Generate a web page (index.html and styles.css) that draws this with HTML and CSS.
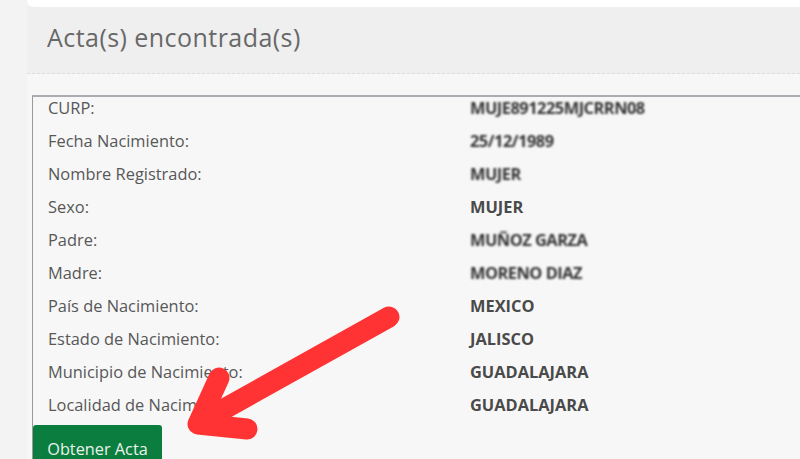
FILE: index.html
```html
<!DOCTYPE html>
<html lang="es">
<head>
<meta charset="utf-8">
<title>Acta(s) encontrada(s)</title>
<link rel="stylesheet" href="styles.css">
</head>
<body>
<div class="page">
  <div class="topstrip"></div>
  <div class="panel">
    <div class="panel-head">
      <h2 class="title">Acta(s) encontrada(s)</h2>
    </div>
    <div class="panel-body">
      <div class="record">
        <div class="rows">
          <div class="row"><span class="label">CURP:</span><span class="value blur">MUJE891225MJCRRN08</span></div>
          <div class="row"><span class="label">Fecha Nacimiento:</span><span class="value blur">25/12/1989</span></div>
          <div class="row"><span class="label">Nombre Registrado:</span><span class="value blur">MUJER</span></div>
          <div class="row"><span class="label">Sexo:</span><span class="value">MUJER</span></div>
          <div class="row"><span class="label">Padre:</span><span class="value blur">MUÑOZ GARZA</span></div>
          <div class="row"><span class="label">Madre:</span><span class="value blur">MORENO DIAZ</span></div>
          <div class="row"><span class="label">País de Nacimiento:</span><span class="value">MEXICO</span></div>
          <div class="row"><span class="label">Estado de Nacimiento:</span><span class="value">JALISCO</span></div>
          <div class="row"><span class="label">Municipio de Nacimiento:</span><span class="value">GUADALAJARA</span></div>
          <div class="row"><span class="label">Localidad de Nacimiento:</span><span class="value">GUADALAJARA</span></div>
        </div>
        <button class="btn-obtener" type="button">Obtener Acta</button>
      </div>
    </div>
  </div>
  <svg class="arrow" width="800" height="459" viewBox="0 0 800 459" aria-hidden="true">
    <g fill="none" stroke="#ff3333" stroke-width="21" stroke-linecap="round" stroke-linejoin="round">
      <line x1="389" y1="317" x2="199" y2="423"/>
      <polyline points="219,378 198,424 247,429"/>
    </g>
  </svg>
</div>
</body>
</html>
```
FILE: styles.css
```css
* { box-sizing: border-box; }
html, body { margin: 0; padding: 0; }
body {
  background: #f3f3f3;
  font-family: "Open Sans", "Liberation Sans", sans-serif;
  width: 800px;
  height: 459px;
  overflow: hidden;
}
.page {
  position: relative;
  width: 800px;
  height: 459px;
  overflow: hidden;
}
.topstrip {
  height: 7px;
  margin-left: 27px;
  background: #ffffff;
  border-bottom-left-radius: 8px;
}
.panel {
  margin-left: 27px;
  background: #f7f7f7;
}
.panel-head {
  height: 67px;
  background: #efefef;
  border-bottom: 1px dashed #dcdcdc;
  display: flex;
  align-items: center;
  padding-left: 20px;
  padding-bottom: 7px;
}
.title {
  margin: 0;
  font-family: "Open Sans", "Liberation Sans", sans-serif;
  font-weight: 400;
  font-size: 25px;
  letter-spacing: 0.45px;
  color: #686868;
}
.panel-body {
  padding-top: 21px;
  padding-left: 5px;
}
.record {
  border-top: 2px solid #a9acb0;
  border-left: 1px solid #9a9a9a;
  background: #f7f7f7;
  height: 400px;
}
.rows {
  margin-top: -6px;
}
.row {
  display: flex;
  height: 33px;
  line-height: 33px;
  font-size: 16.4px;
  padding-left: 15px;
}
.label {
  width: 422px;
  color: #585858;
}
.value {
  font-weight: 700;
  color: #4a4a4a;
}
.value.blur {
  filter: blur(0.9px);
  color: #333333;
  letter-spacing: -0.5px;
}
.btn-obtener {
  display: block;
  margin-top: 4px;
  margin-left: 0;
  width: 129px;
  height: 40px;
  padding: 8px 0 0 0;
  border: none;
  border-radius: 3px 3px 0 0;
  background: #0b7d3f;
  color: #eaf3ec;
  font-family: "Open Sans", "Liberation Sans", sans-serif;
  font-size: 16.3px;
  line-height: 22px;
  text-align: center;
  vertical-align: top;
}
.arrow {
  position: absolute;
  left: 0;
  top: 0;
  pointer-events: none;
}
```
